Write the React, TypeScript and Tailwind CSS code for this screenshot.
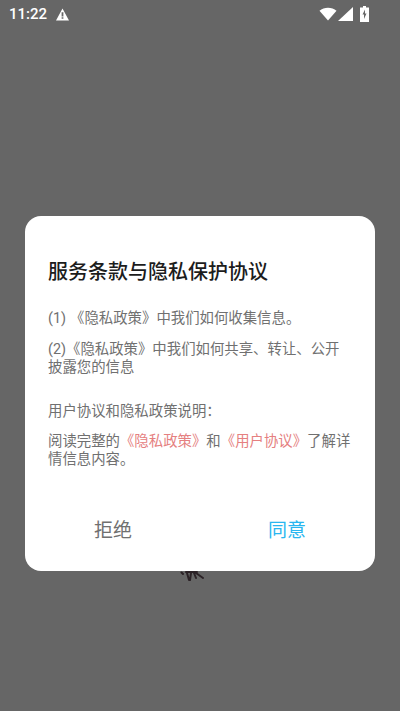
import React from "react";

function StatusBar() {
  return (
    <div className="flex h-[28px] items-center justify-between pl-[9px] pr-[31px] text-white">
      <div className="flex items-center gap-[9px]">
        <span className="text-[15px] leading-none font-medium font-['Roboto',sans-serif]">11:22</span>
        <svg width="13" height="13" viewBox="0 0 13 13">
          <path fillRule="evenodd" fill="#fff" d="M6.5 0.5 L13 12.5 H0 Z M5.6 4.2 V8.4 H7.4 V4.2 Z M5.6 9.2 V10.8 H7.4 V9.2 Z" />
        </svg>
      </div>
      <div className="flex items-center">
        <svg width="18" height="14" viewBox="0 0 18 14">
          <path fill="#fff" d="M0.5 3.8 C5 -0.4 13 -0.4 17.5 3.8 L9 13.5 Z" />
        </svg>
        <svg width="15" height="14" viewBox="0 0 15 14" className="ml-[1px]">
          <path fill="#fff" d="M15 0 V14 H0 Z" />
        </svg>
        <svg width="9" height="16" viewBox="0 0 9 16" className="ml-[7px] mb-[1px]">
          <path fill="#fff" fillRule="evenodd" d="M3 0 H6 V1.5 H9 V16 H0 V1.5 H3 Z M5 3.5 L2.5 8.5 H4 V13 L6.5 7.5 H5 Z" />
        </svg>
      </div>
    </div>
  );
}

export default function App() {
  return (
    <div className="relative flex h-[711px] w-[400px] flex-col overflow-hidden bg-[#666666] font-['Roboto','Noto_Sans_CJK_SC',sans-serif]">
      <StatusBar />

      <div className="mx-[25px] mt-[188px] flex h-[355px] flex-col rounded-[16px] bg-white px-[23px] pt-[42px]">
        <h1 className="text-[20px] leading-[28px] font-medium text-[#1c1c1c]">
          服务条款与隐私保护协议
        </h1>
        <div className="mt-[24px] text-[14.4px] leading-[18px] text-[#707070]">
          <p className="flex gap-[4px]">
            <span>(1)</span>
            <span>《隐私政策》中我们如何收集信息。</span>
          </p>
          <p className="mt-[13px]">
            (2)《隐私政策》中我们如何共享、转让、公开
            <br />
            披露您的信息
          </p>
          <p className="mt-[26px]">用户协议和隐私政策说明：</p>
          <div className="mt-[12px]">
            <p>
              阅读完整的<span className="text-[#e58080]">《隐私政策》</span>和<span className="text-[#e58080]">《用户协议》</span>了解详
            </p>
            <p>情信息内容。</p>
          </div>
        </div>
        <div className="mt-auto mb-[27px] flex justify-between text-[19px] leading-[26px]">
          <button className="ml-[46px] text-[#707070]">拒绝</button>
          <button className="mr-[46px] text-[#29b6f0]">同意</button>
        </div>
      </div>

      {/* bit of the splash logo poking out under the dialog */}
      <svg width="24" height="11" viewBox="0 0 24 11" className="absolute left-[180px] top-[571px]">
        <path d="M1.5 1.5 L3 3 M7 2 L9 9 M11 2 L10 9 M14 2 L16 7 M16 2 L23 7 M6 1 H17" stroke="#2b2226" strokeWidth="2" fill="none" strokeLinecap="round" />
      </svg>
    </div>
  );
}
